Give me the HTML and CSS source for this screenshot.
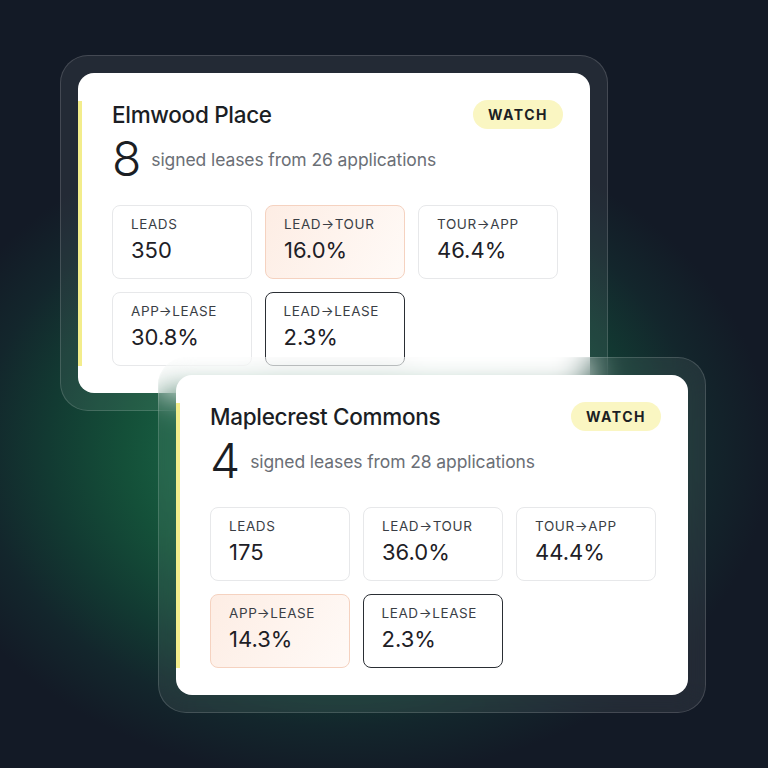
FILE: index.html
```html
<!DOCTYPE html>
<html lang="en">
  <head>
    <meta charset="UTF-8" />
    <meta name="viewport" content="width=device-width, initial-scale=1.0" />
    <title>Leasing Funnel</title>
    <link rel="stylesheet" href="styles.css">
  </head>
  <body>
    <div class="stage">
      <div class="frame frame-back">
        <div class="property-card">
          <div class="card-head">
            <h3 class="property-name">Elmwood Place</h3>
            <span class="status-pill">WATCH</span>
          </div>
          <div class="summary">
            <span class="big-num">8</span>
            <span class="summary-text">signed leases from 26 applications</span>
          </div>
          <div class="metrics">
            <div class="metric">
              <div class="metric-label">LEADS</div>
              <div class="metric-value">350</div>
            </div>
            <div class="metric metric-warn">
              <div class="metric-label">LEAD→TOUR</div>
              <div class="metric-value">16.0%</div>
            </div>
            <div class="metric">
              <div class="metric-label">TOUR→APP</div>
              <div class="metric-value">46.4%</div>
            </div>
            <div class="metric">
              <div class="metric-label">APP→LEASE</div>
              <div class="metric-value">30.8%</div>
            </div>
            <div class="metric metric-key">
              <div class="metric-label">LEAD→LEASE</div>
              <div class="metric-value">2.3%</div>
            </div>
          </div>
        </div>
      </div>

      <div class="frame frame-front">
        <div class="property-card">
          <div class="card-head">
            <h3 class="property-name">Maplecrest Commons</h3>
            <span class="status-pill">WATCH</span>
          </div>
          <div class="summary">
            <span class="big-num">4</span>
            <span class="summary-text">signed leases from 28 applications</span>
          </div>
          <div class="metrics">
            <div class="metric">
              <div class="metric-label">LEADS</div>
              <div class="metric-value">175</div>
            </div>
            <div class="metric">
              <div class="metric-label">LEAD→TOUR</div>
              <div class="metric-value">36.0%</div>
            </div>
            <div class="metric">
              <div class="metric-label">TOUR→APP</div>
              <div class="metric-value">44.4%</div>
            </div>
            <div class="metric metric-warn">
              <div class="metric-label">APP→LEASE</div>
              <div class="metric-value">14.3%</div>
            </div>
            <div class="metric metric-key">
              <div class="metric-label">LEAD→LEASE</div>
              <div class="metric-value">2.3%</div>
            </div>
          </div>
        </div>
      </div>
    </div>
  </body>
</html>
```

FILE: styles.css
```css
body {
  margin: 0;
  width: 768px;
  height: 768px;
  overflow: hidden;
  font-family: "Inter", "Liberation Sans", sans-serif;
  color: #1b1e24;
  background:
    radial-gradient(ellipse 430px 330px at 340px 450px, #1f7c53 0%, #1a6646 30%, #145039 50%, #123a32 68%, #13262c 84%, #131a26 100%),
    #131a26;
}

.stage {
  padding-top: 55px;
}

/* glass frame around each card */
.frame {
  box-sizing: border-box;
  width: 548px;
  height: 356px;
  padding: 17px;
  border-radius: 28px;
  border: 1px solid rgba(255, 255, 255, 0.15);
  background: rgba(255, 255, 255, 0.07);
}

.frame-back {
  margin-left: 60px;
}

.frame-front {
  position: relative;
  margin: -54px 0 0 158px;
  backdrop-filter: blur(16px);
}

.property-card {
  position: relative;
  box-sizing: border-box;
  height: 100%;
  background: #fff;
  border-radius: 16px;
  padding: 26px 32px 27px 34px;
}

/* yellow status strip on the left edge */
.property-card::before {
  content: "";
  position: absolute;
  left: 0;
  top: 28px;
  bottom: 27px;
  width: 4px;
  background: #f3ed8c;
}

.card-head {
  display: flex;
  justify-content: space-between;
  align-items: center;
  height: 30px;
}

.property-name {
  margin: 0;
  font-size: 22.5px;
  font-weight: 500;
  letter-spacing: -0.3px;
}

.status-pill {
  margin-right: -5px;
  padding: 0 15px;
  height: 29px;
  line-height: 29px;
  border-radius: 15px;
  background: #faf6c2;
  font-size: 14px;
  font-weight: 700;
  letter-spacing: 1.5px;
  color: #1c1f24;
}

.summary {
  display: flex;
  align-items: center;
  gap: 10px;
  margin-top: 6px;
  height: 48px;
}

.big-num {
  font-size: 48px;
  font-weight: 300;
  line-height: 48px;
}

.summary-text {
  font-size: 17.5px;
  color: #6b6f76;
  letter-spacing: -0.1px;
}

.metrics {
  display: grid;
  grid-template-columns: repeat(3, 1fr);
  gap: 13px;
  margin-top: 22px;
}

.metric {
  padding: 9px 18px 14px;
  border: 1px solid #e7e8ea;
  border-radius: 8px;
  display: flex;
  flex-direction: column;
  gap: 3px;
}

.metric-warn {
  border-color: #f5d2c0;
  background: linear-gradient(120deg, #fdede4, #fffaf7);
}

.metric-key {
  border: 1.5px solid #2a2e34;
  padding: 8.5px 17.5px 13.5px;
}

.metric-label {
  font-size: 13.5px;
  line-height: 18px;
  letter-spacing: 0.6px;
  color: #3a3e45;
}

.metric-value {
  font-size: 22px;
  line-height: 28px;
  color: #1d2026;
}
```
